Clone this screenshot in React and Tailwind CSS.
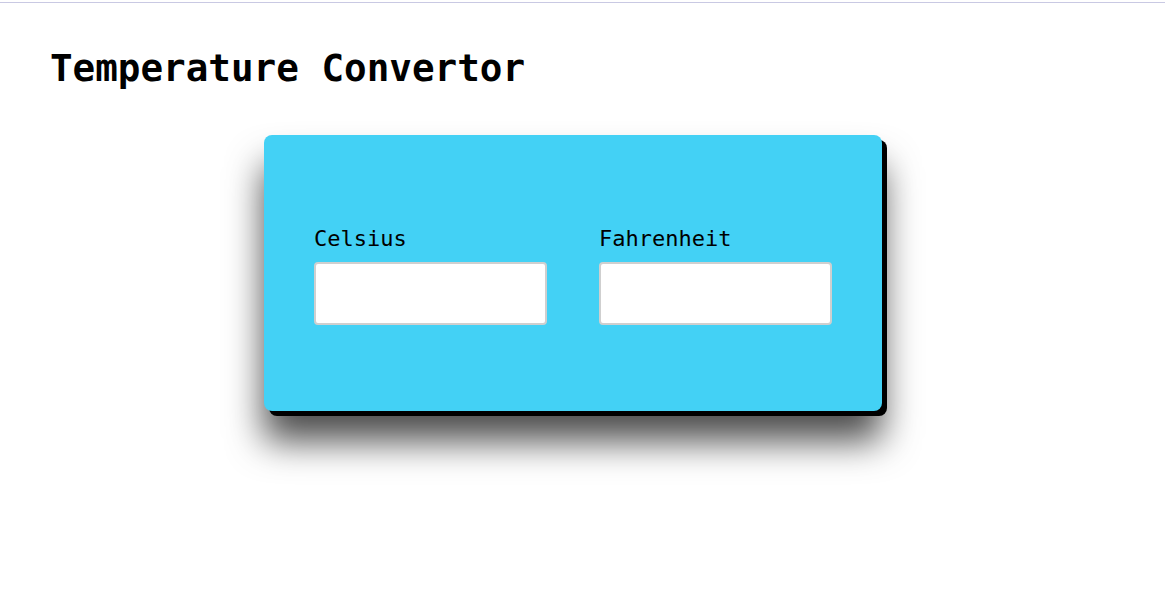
export default function App() {
  const mono = { fontFamily: '"DejaVu Sans Mono", "Liberation Mono", monospace' };
  return (
    <div className="min-h-[593px] bg-white" style={mono}>
      <div className="h-[2px] bg-white" />
      <div className="h-[1px] bg-[#c9c9e3]" />
      <div className="px-[50px]">
        <h1 className="mt-[42px] text-[37.6px] leading-[46px] font-bold text-black">
          Temperature Convertor
        </h1>
        <div className="ml-[214px] mt-[44px] w-[618px] h-[276px] rounded-[8px] bg-[#43d1f5] shadow-[5px_5px_0_#000,0_30px_36px_rgba(0,0,0,0.7)] px-[50px] pt-[90px]">
          <div className="flex gap-[52px]">
            <div className="w-[233px] flex flex-col">
              <label className="text-[22px] leading-[27px] text-black">Celsius</label>
              <input className="mt-[10px] h-[63px] w-full rounded-[4px] border-2 border-[#cfcfcf] bg-white outline-none" />
            </div>
            <div className="w-[233px] flex flex-col">
              <label className="text-[22px] leading-[27px] text-black">Fahrenheit</label>
              <input className="mt-[10px] h-[63px] w-full rounded-[4px] border-2 border-[#cfcfcf] bg-white outline-none" />
            </div>
          </div>
        </div>
      </div>
    </div>
  );
}
